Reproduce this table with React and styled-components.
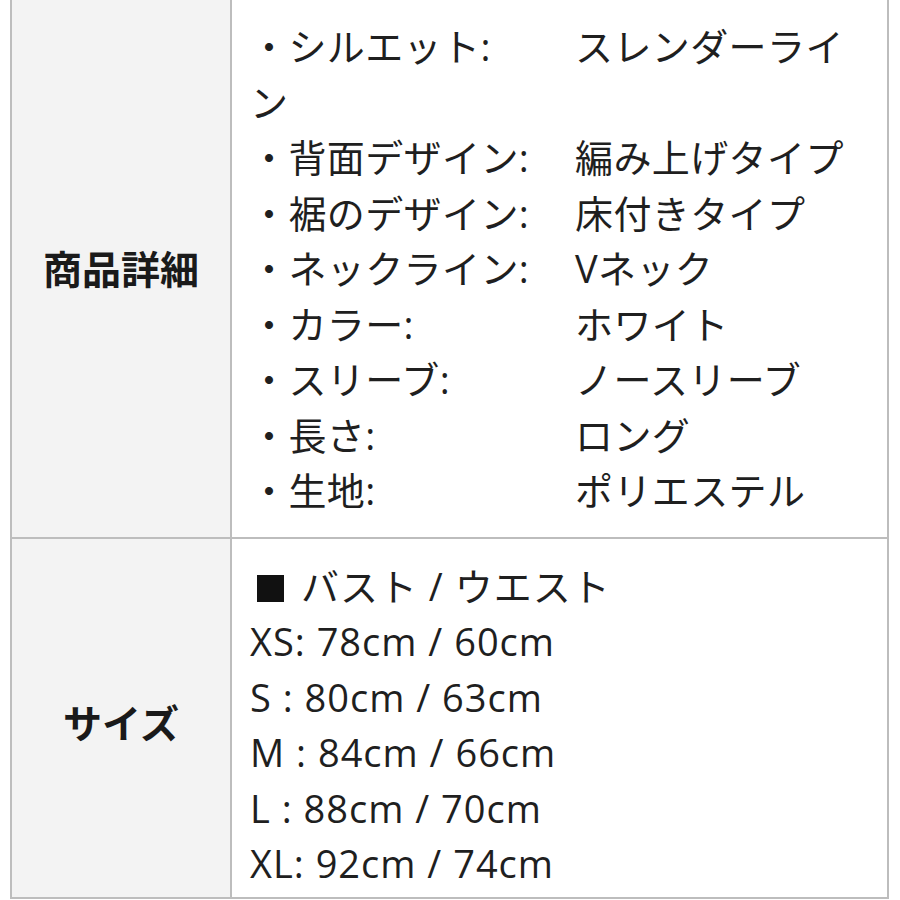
import React from 'react';
import styled, { createGlobalStyle } from 'styled-components';

const GlobalStyle = createGlobalStyle`
  html, body {
    margin: 0;
    padding: 0;
    background: #ffffff;
    overflow: hidden;
  }
  body {
    font-family: "Open Sans", "Noto Sans CJK JP", sans-serif;
    color: #1f1f1f;
  }
`;

const Table = styled.div`
  display: grid;
  grid-template-columns: 218px 655px;
  gap: 2px;
  padding: 2px;
  width: 879px;
  box-sizing: border-box;
  margin: -4px 0 0 10px;
  background: #bdbdbd;
`;

const LabelCell = styled.div`
  display: flex;
  align-items: center;
  justify-content: center;
  background: #f3f3f3;
  font-size: 39px;
  font-weight: 700;
  color: #1a1a1a;
  padding-top: ${({ $shift }) => $shift || 0}px;
`;

const ValueCell = styled.div`
  background: #ffffff;
  padding: ${({ $pad }) => $pad};
  font-size: 38px;
  line-height: 55.5px;
`;

const SpecLine = styled.div`
  word-break: break-all;
  letter-spacing: 0.4px;
`;

const SpecKey = styled.span`
  display: inline-block;
  width: 325px;
  white-space: nowrap;
`;

const SizeLine = styled.div`
  white-space: nowrap;
  letter-spacing: 1px;
`;

const Square = styled.span`
  display: inline-block;
  width: 27px;
  height: 27px;
  background: #111;
  margin: 0 17px 0 7px;
  vertical-align: -1px;
`;

const specs = [
  ['・シルエット:', 'スレンダーライン'],
  ['・背面デザイン:', '編み上げタイプ'],
  ['・裾のデザイン:', '床付きタイプ'],
  ['・ネックライン:', 'Vネック'],
  ['・カラー:', 'ホワイト'],
  ['・スリーブ:', 'ノースリーブ'],
  ['・長さ:', 'ロング'],
  ['・生地:', 'ポリエステル'],
];

const sizes = [
  'XS: 78cm / 60cm',
  'S : 80cm / 63cm',
  'M : 84cm / 66cm',
  'L : 88cm / 70cm',
  'XL: 92cm / 74cm',
];

export default function App() {
  return (
    <>
      <GlobalStyle />
      <Table>
        <LabelCell>商品詳細</LabelCell>
        <ValueCell $pad="21px 18px 18px 18px">
          {specs.map(([key, value]) => (
            <SpecLine key={key}>
              <SpecKey>{key}</SpecKey>
              {value}
            </SpecLine>
          ))}
        </ValueCell>
        <LabelCell $shift={6}>サイズ</LabelCell>
        <ValueCell $pad="20px 18px 5px 18px">
          <SizeLine>
            <Square />バスト / ウエスト
          </SizeLine>
          {sizes.map((s) => (
            <SizeLine key={s}>{s}</SizeLine>
          ))}
        </ValueCell>
      </Table>
    </>
  );
}
